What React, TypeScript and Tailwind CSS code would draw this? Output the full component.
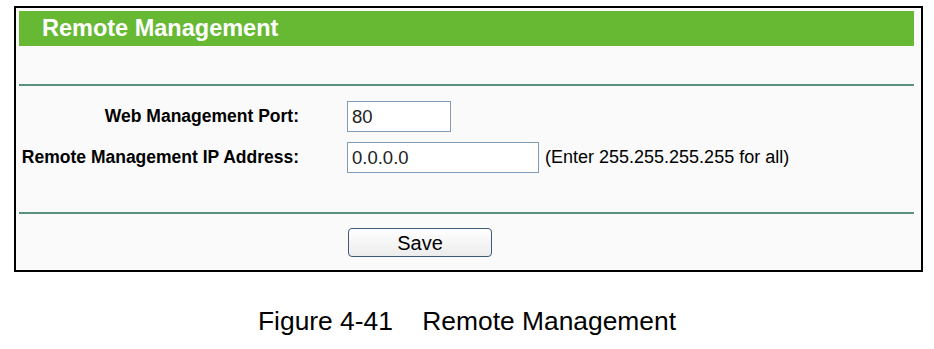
import React from "react";

export default function App() {
  const font = { fontFamily: '"Liberation Sans", Arial, sans-serif' };
  return (
    <div className="w-[934px] h-[349px] bg-white overflow-hidden" style={font}>
      <div className="ml-[14px] mt-[6px] w-[909px] h-[266px] border-2 border-black bg-[#fafafa] pt-[3px] pl-[3px] pr-[7px] flex flex-col">
        <div className="h-[35px] bg-[#67b934] flex items-center pl-[23px]">
          <span className="text-white font-bold text-[23.5px] leading-none">Remote Management</span>
        </div>
        <div className="h-[38px]" />
        <div className="h-[2px] bg-[#5b9181]" />
        <div className="h-[15px]" />
        <div className="flex items-center h-[31px]">
          <div className="w-[280px] text-right font-bold text-[17.5px] text-black">Web Management Port:</div>
          <div className="w-[48px]" />
          <div className="w-[104px] h-[31px] border border-[#7f9db9] bg-white flex items-center pl-[4px] text-[18.5px] text-[#222]">80</div>
        </div>
        <div className="h-[10px]" />
        <div className="flex items-center h-[31px]">
          <div className="w-[280px] text-right font-bold text-[17.5px] text-black whitespace-nowrap">Remote Management IP Address:</div>
          <div className="w-[48px]" />
          <div className="w-[192px] h-[31px] border border-[#7f9db9] bg-white flex items-center pl-[4px] text-[18.5px] text-[#222]">0.0.0.0</div>
          <span className="ml-[6px] text-[18px] text-black">(Enter 255.255.255.255 for all)</span>
        </div>
        <div className="h-[39px]" />
        <div className="h-[2px] bg-[#5b9181]" />
        <div className="h-[14px]" />
        <div className="flex">
          <div className="w-[329px]" />
          <button className="w-[144px] h-[29px] rounded-[4px] border border-[#3c5a7a] bg-gradient-to-b from-white to-[#ececec] text-[20px] text-black leading-none">Save</button>
        </div>
      </div>
      <div className="mt-[36px] text-center text-[26.4px] text-black whitespace-pre leading-none">Figure 4-41    Remote Management</div>
    </div>
  );
}
